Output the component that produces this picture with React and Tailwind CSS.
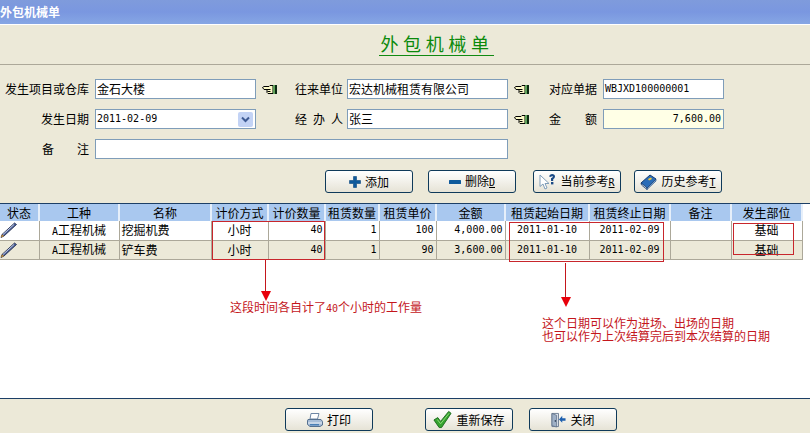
const CJK = { fontFamily: '"Noto Sans CJK SC", sans-serif' };
const MONO = { fontFamily: '"DejaVu Sans Mono", monospace', fontSize: 10 };

function Hand() {
  return (
    <svg width="16" height="11" viewBox="0 0 16 11" className="mt-[1px] shrink-0">
      <path d="M0.5 3.5 L2 2.5 H7 L8 1.5 H11 V9.5 H6 L5 8.5 V5.5 H2 Z" fill="#fdfbc8" stroke="#000" strokeWidth="1" />
      <path d="M5 5.5 H8.5 M5.5 7.5 H8.5" stroke="#000" strokeWidth="1" />
      <rect x="11" y="1" width="2" height="9" fill="#5fa05a" />
      <rect x="13" y="1" width="2" height="9" fill="#0c2a12" />
    </svg>
  );
}

function Plus() {
  return (
    <svg width="12" height="12" viewBox="0 0 12 12">
      <path d="M4.5 0.5 H7.5 V4.5 H11.5 V7.5 H7.5 V11.5 H4.5 V7.5 H0.5 V4.5 H4.5 Z" fill="#0f5a9c" stroke="#0a4680" strokeWidth="0.6" />
    </svg>
  );
}

function Minus() {
  return (
    <svg width="12" height="4" viewBox="0 0 12 4">
      <rect x="0" y="0" width="12" height="4" rx="0.5" fill="#0f5a9c" />
    </svg>
  );
}

function CursorHelp() {
  return (
    <svg width="17" height="17" viewBox="0 0 17 17">
      <path d="M1 2 L1 13.5 L4 11 L6 16 L8 15 L6 10.5 L10 10.5 Z" fill="#fff" stroke="#7f9db9" strokeWidth="1" />
      <path d="M10 3.5 Q10.5 1 13 1 Q16 1 16 3.5 Q16 5.3 14.2 6.2 L14.2 8 H12 V5.3 Q13.8 4.8 13.8 3.5 Q13.5 2.7 12.8 3 L12.2 4 Z" fill="#1b4a86" />
      <rect x="12" y="9" width="2.4" height="2.4" fill="#1b4a86" />
    </svg>
  );
}

function Book() {
  return (
    <svg width="17" height="16" viewBox="0 0 17 16">
      <path d="M1 9 L10 1 L16 5 L7 14 Z" fill="#2a6cb8" stroke="#123a70" strokeWidth="1" />
      <path d="M1 9 L7 14 L7 15.5 L1.5 11 Z" fill="#fff" stroke="#123a70" strokeWidth="0.8" />
      <path d="M7 14 L16 5 L16 7 L7 15.5 Z" fill="#7fa8d8" stroke="#123a70" strokeWidth="0.6" />
      <path d="M8 5 L11 3.5 L12 5 L9 6.5 Z" fill="#f3c93a" />
    </svg>
  );
}

function Printer() {
  return (
    <svg width="16" height="16" viewBox="0 0 16 16">
      <path d="M4 1.5 H12 L10.5 7 H3 Z" fill="#fff" stroke="#6f87a5" strokeWidth="1" />
      <path d="M1 7.5 H14 L15.5 9.5 V13 L13 14.5 H3 L0.5 12.5 V9 Z" fill="#a7bdd8" stroke="#56708f" strokeWidth="1" />
      <path d="M1 11 H15" stroke="#e8eef6" strokeWidth="1" />
      <rect x="3" y="12" width="9" height="1.5" fill="#4a7fb5" />
    </svg>
  );
}

function Check() {
  return (
    <svg width="19" height="19" viewBox="0 0 20 19">
      <path d="M1 10 L5 7.5 L8 11.5 L16.5 1 L19 3 L9 18 L6.5 18 Z" fill="#35a32f" stroke="#1c6a1c" strokeWidth="1" />
      <path d="M4.5 9.5 L8 14 L17 3" stroke="#8fdc7a" strokeWidth="1" fill="none" />
    </svg>
  );
}

function Door() {
  return (
    <svg width="15" height="16" viewBox="0 0 16 16">
      <path d="M1 1 H8 V15 H1 Z" fill="#dfe5ee" stroke="#6f7f94" strokeWidth="1" />
      <path d="M1 1 L6 3 V15.5 L1 14 Z" fill="#9fb0c6" stroke="#5c6d84" strokeWidth="0.8" />
      <rect x="4" y="8" width="1.2" height="2" fill="#33425a" />
      <path d="M15.5 6 H12 V3.5 L8.5 7.5 L12 11 V8.8 H15.5 Z" fill="#1d5fae" />
    </svg>
  );
}

function Pencil() {
  return (
    <svg width="17" height="16" viewBox="0 0 17 16">
      <path d="M14.5 1 L16.5 2.5 L4 14 L1 15.5 L2 12.5 Z" fill="#4b5f96" stroke="#1c2748" strokeWidth="0.8" />
      <path d="M2 12.5 L4 14 L1 15.5 Z" fill="#c98d2e" />
      <path d="M14 2.5 L3 12.5" stroke="#dfe6f7" strokeWidth="0.8" />
    </svg>
  );
}

function Button({ icon, label, hotkey, className = "" }) {
  return (
    <button
      className={
        "flex h-[23px] w-[88px] shrink-0 items-center justify-center gap-[4px] rounded-[3px] border border-[#0f3a5a] bg-gradient-to-b from-[#ffffff] to-[#e6e3d6] text-[12px] text-black " +
        className
      }
      style={CJK}
    >
      {icon}
      <span className="leading-none">
        {label}
        {hotkey && <span className="underline" style={MONO}>{hotkey}</span>}
      </span>
    </button>
  );
}

function Field({ value, className = "bg-white", mono = false, right = false, children }) {
  return (
    <div
      className={
        "flex h-[20px] shrink-0 items-center justify-between border border-[#7f9db9] pl-[1px] text-[12px] text-black " +
        className
      }
      style={CJK}
    >
      <span
        className={(right ? "ml-auto pr-[2px] " : "") + "leading-none whitespace-nowrap"}
        style={mono ? MONO : undefined}
      >
        {value}
      </span>
      {children}
    </div>
  );
}

function Label({ children, className = "", spread = false }) {
  return (
    <div
      className={
        "shrink-0 text-[12px] leading-none text-black whitespace-nowrap " + (spread ? "flex justify-between " : "text-right ") + className
      }
      style={CJK}
    >
      {children}
    </div>
  );
}

const cols = [39, 80, 92, 57, 57, 54, 57, 69, 84, 81, 61, 71];
const headers = ["状态", "工种", "名称", "计价方式", "计价数量", "租赁数量", "租赁单价", "金额", "租赁起始日期", "租赁终止日期", "备注", "发生部位"];
const rows = [
  { name: "挖掘机费", count: "40", qty: "1", price: "100", amount: "4,000.00", bg: "bg-white" },
  { name: "铲车费", count: "40", qty: "1", price: "90", amount: "3,600.00", bg: "bg-[#ece9d8]" },
];
const cell = "h-[19px] border-r border-b border-[#aca899] p-0 px-[2px] text-[12px] leading-none";

function Arrow({ className, length }) {
  return (
    <div className={"absolute flex w-[11px] flex-col items-center " + className}>
      <div className="w-[1px] bg-[#c4161c]" style={{ height: length }} />
      <div className="h-0 w-0 border-x-[5px] border-t-[10px] border-x-transparent border-t-[#e8000b]" />
    </div>
  );
}

export default function App() {
  return (
    <div className="flex h-[433px] w-[810px] flex-col overflow-hidden bg-[#ece9d8]" style={CJK}>
      <div className="flex h-[25px] shrink-0 items-center border-b border-white bg-gradient-to-b from-[#7f9bdc] via-[#7a97e0] to-[#86a6e4] text-[12px] font-bold text-white">
        外包机械单
      </div>
      <div className="flex h-[40px] shrink-0 items-center justify-center border-b border-[#aca899] pb-[2px] pl-[62px]">
        <span className="border-b border-[#118a11] pl-[2px] text-[18px] leading-[24px] tracking-[4.6px] text-[#0b8a0b]">外包机械单</span>
      </div>

      <div className="flex h-[138px] shrink-0 flex-col pt-[14px]">
        <div className="flex h-[20px] items-center">
          <Label className="w-[89px]">发生项目或仓库</Label>
          <Field value="金石大楼" className="ml-[6px] w-[161px] bg-white" />
          <div className="ml-[6px] w-[16px]"><Hand /></div>
          <Label className="ml-[17px] w-[48px]">往来单位</Label>
          <Field value="宏达机械租赁有限公司" className="ml-[4px] w-[161px] bg-white" />
          <div className="ml-[6px] w-[16px]"><Hand /></div>
          <Label className="ml-[19px] w-[48px]">对应单据</Label>
          <Field value="WBJXD100000001" mono className="ml-[6px] w-[121px] bg-white" />
        </div>
        <div className="mt-[10px] flex h-[20px] items-center">
          <Label className="w-[89px]">发生日期</Label>
          <Field value="2011-02-09" mono className="ml-[6px] w-[161px] bg-white">
            <span className="mr-[2px] flex h-[15px] w-[15px] items-center justify-center rounded-[2px] bg-[#c3d3f5]">
              <svg width="9" height="7" viewBox="0 0 9 7"><path d="M1 1.5 L4.5 5 L8 1.5" fill="none" stroke="#3f5b94" strokeWidth="2" /></svg>
            </span>
          </Field>
          <Label className="ml-[39px] w-[48px]" spread><span>经</span><span>办</span><span>人</span></Label>
          <Field value="张三" className="ml-[4px] w-[161px] bg-white" />
          <div className="ml-[6px] w-[16px]"><Hand /></div>
          <Label className="ml-[19px] w-[48px]" spread><span>金</span><span>额</span></Label>
          <Field value="7,600.00" mono right className="ml-[6px] w-[121px] bg-[#ffffe6]" />
        </div>
        <div className="mt-[10px] flex h-[20px] items-center">
          <Label className="ml-[42px] w-[47px]" spread><span>备</span><span>注</span></Label>
          <Field value="" className="ml-[6px] w-[413px] bg-white" />
        </div>
        <div className="mt-[11px] flex items-center pl-[325px]">
          <Button icon={<Plus />} label="添加" />
          <Button icon={<Minus />} label="删除" hotkey="D" className="ml-[15px]" />
          <Button icon={<CursorHelp />} label="当前参考" hotkey="R" className="ml-[17px]" />
          <Button icon={<Book />} label="历史参考" hotkey="T" className="ml-[13px]" />
        </div>
      </div>

      <div className="relative flex-1 border-t border-[#1c3f66] bg-white">
        <table className="w-[802px] table-fixed border-collapse">
          <colgroup>
            {cols.map((c, i) => <col key={i} style={{ width: c }} />)}
          </colgroup>
          <thead>
            <tr className="h-[17px] bg-[#a9c8ef]">
              {headers.map((h) => (
                <th key={h} className="border-r-2 border-r-[#e6effa] p-0 text-center text-[12px] leading-none font-normal whitespace-nowrap text-black">
                  {h}
                </th>
              ))}
            </tr>
          </thead>
          <tbody>
            {rows.map((r) => (
              <tr key={r.name} className={r.bg}>
                <td className={cell + " !px-0"}><Pencil /></td>
                <td className={cell + " text-center"}>
                  <span style={MONO}>A</span>工程机械
                </td>
                <td className={cell}>{r.name}</td>
                <td className={cell + " text-center"}>小时</td>
                <td className={cell + " text-right"} style={MONO}>{r.count}</td>
                <td className={cell + " text-right"} style={MONO}>{r.qty}</td>
                <td className={cell + " text-right"} style={MONO}>{r.price}</td>
                <td className={cell + " text-right"} style={MONO}>{r.amount}</td>
                <td className={cell + " text-center"} style={MONO}>2011-01-10</td>
                <td className={cell + " text-center"} style={MONO}>2011-02-09</td>
                <td className={cell}></td>
                <td className={cell + " text-center"}>基础</td>
              </tr>
            ))}
          </tbody>
        </table>

        <div className="absolute top-[17px] left-[212px] h-[39px] w-[113px] border border-[#c8262c]" />
        <div className="absolute top-[18px] left-[509px] h-[40px] w-[155px] border border-[#c8262c]" />
        <div className="absolute top-[19px] left-[733px] h-[32px] w-[61px] border border-[#c8262c]" />
        <Arrow className="top-[56px] left-[260px]" length={31} />
        <Arrow className="top-[59px] left-[560px]" length={34} />
        <div className="absolute top-[96px] left-[230px] text-[12px] leading-[14px] whitespace-nowrap text-[#c4161c]">
          这段时间各自计了<span style={MONO}>40</span>个小时的工作量
        </div>
        <div className="absolute top-[112px] left-[542px] text-[12px] leading-[13px] whitespace-nowrap text-[#c4161c]">
          这个日期可以作为进场、出场的日期
          <br />
          也可以作为上次结算完后到本次结算的日期
        </div>
      </div>

      <div className="flex h-[35px] shrink-0 items-start border-t border-[#1c3f66] pt-[9px] pl-[285px]">
        <Button icon={<Printer />} label="打印" />
        <Button icon={<Check />} label="重新保存" className="ml-[52px]" />
        <Button icon={<Door />} label="关闭" className="ml-[16px]" />
      </div>
    </div>
  );
}
